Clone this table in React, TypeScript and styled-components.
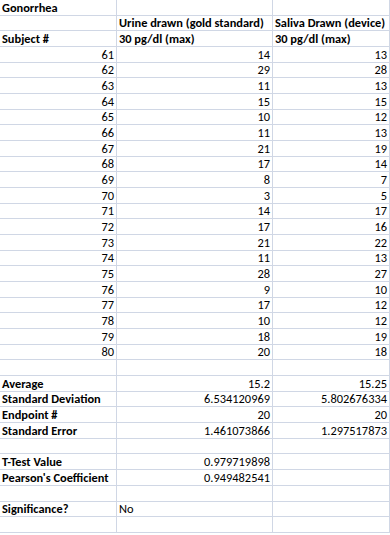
import React from 'react'
import styled, { createGlobalStyle } from 'styled-components'

const GlobalStyle = createGlobalStyle`
  html, body {
    margin: 0;
    padding: 0;
    background: #fff;
  }
`

const Sheet = styled.div`
  display: grid;
  grid-template-columns: 117px 156px 117px;
  grid-auto-rows: 15.68px;
  width: 390px;
  font-family: Carlito, Lato, "Open Sans", sans-serif;
  font-size: 12.4px;
  color: #000;
  background: #fff;
`

const Cell = styled.div<{ $bold?: boolean; $num?: boolean }>`
  box-sizing: border-box;
  border-right: 1px solid #d0d7e5;
  border-bottom: 1px solid #d0d7e5;
  padding: 0 2px 1px 2px;
  display: flex;
  align-items: flex-end;
  justify-content: ${({ $num }) => ($num ? 'flex-end' : 'flex-start')};
  font-weight: ${({ $bold }) => ($bold ? 700 : 400)};
  line-height: 13px;
  white-space: nowrap;
  overflow: visible;
`

type Row = [string, string, string]

const subjects: [number, number, number][] = [
  [61, 14, 13], [62, 29, 28], [63, 11, 13], [64, 15, 15], [65, 10, 12],
  [66, 11, 13], [67, 21, 19], [68, 17, 14], [69, 8, 7], [70, 3, 5],
  [71, 14, 17], [72, 17, 16], [73, 21, 22], [74, 11, 13], [75, 28, 27],
  [76, 9, 10], [77, 17, 12], [78, 10, 12], [79, 18, 19], [80, 20, 18],
]

const stats: Row[] = [
  ['', '', ''],
  ['Average', '15.2', '15.25'],
  ['Standard Deviation', '6.534120969', '5.802676334'],
  ['Endpoint #', '20', '20'],
  ['Standard Error', '1.461073866', '1.297517873'],
  ['', '', ''],
  ['T-Test Value', '0.979719898', ''],
  ["Pearson's Coefficient", '0.949482541', ''],
  ['', '', ''],
]

export default function App() {
  return (
    <>
      <GlobalStyle />
      <Sheet>
        <Cell $bold>Gonorrhea</Cell>
        <Cell />
        <Cell />

        <Cell />
        <Cell $bold>Urine drawn (gold standard)</Cell>
        <Cell $bold>Saliva Drawn (device)</Cell>

        <Cell $bold>Subject #</Cell>
        <Cell $bold>30 pg/dl (max)</Cell>
        <Cell $bold>30 pg/dl (max)</Cell>

        {subjects.map(([id, urine, saliva]) => (
          <React.Fragment key={id}>
            <Cell $num>{id}</Cell>
            <Cell $num>{urine}</Cell>
            <Cell $num>{saliva}</Cell>
          </React.Fragment>
        ))}

        {stats.map(([label, a, b], i) => (
          <React.Fragment key={i}>
            <Cell $bold>{label}</Cell>
            <Cell $num>{a}</Cell>
            <Cell $num>{b}</Cell>
          </React.Fragment>
        ))}

        <Cell $bold>Significance?</Cell>
        <Cell>No</Cell>
        <Cell />

        <Cell />
        <Cell />
        <Cell />
      </Sheet>
    </>
  )
}
